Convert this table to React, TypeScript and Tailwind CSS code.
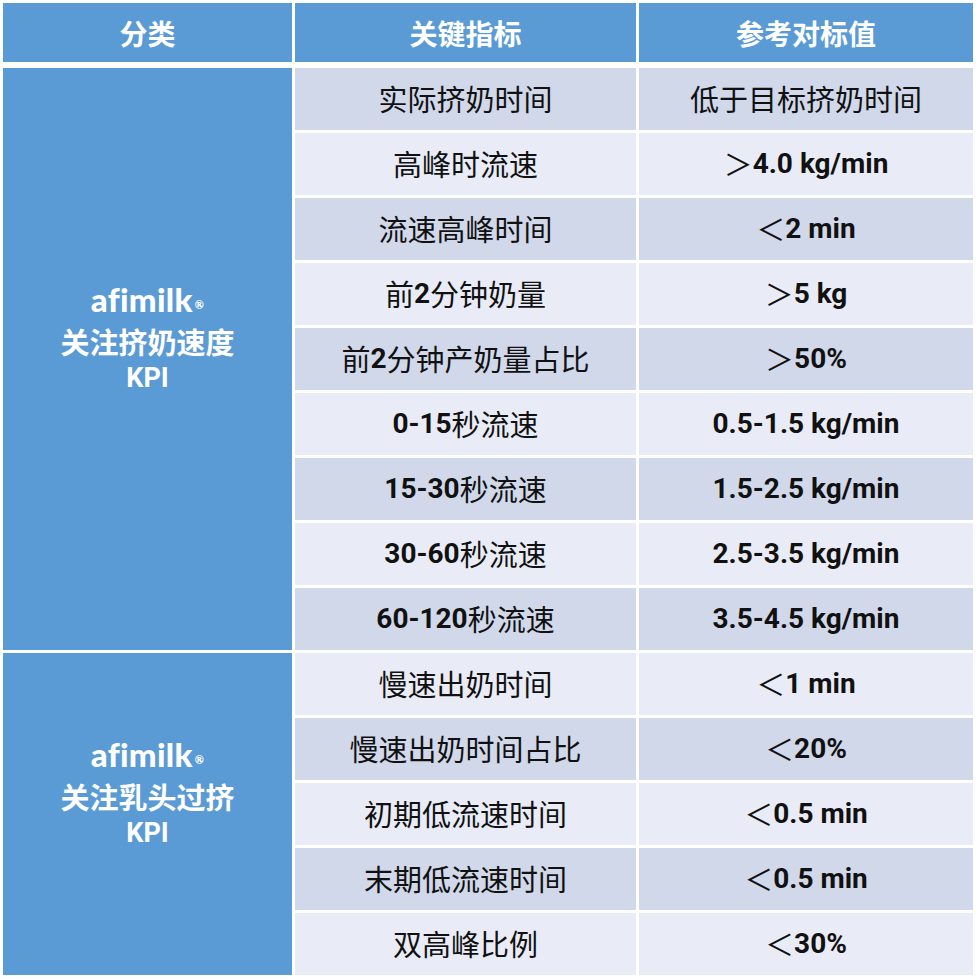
import React from "react";

type Row = { metric: string; value: string };

const rows: Row[] = [
  { metric: "实际挤奶时间", value: "低于目标挤奶时间" },
  { metric: "高峰时流速", value: "＞4.0 kg/min" },
  { metric: "流速高峰时间", value: "＜2 min" },
  { metric: "前2分钟奶量", value: "＞5 kg" },
  { metric: "前2分钟产奶量占比", value: "＞50%" },
  { metric: "0-15秒流速", value: "0.5-1.5 kg/min" },
  { metric: "15-30秒流速", value: "1.5-2.5 kg/min" },
  { metric: "30-60秒流速", value: "2.5-3.5 kg/min" },
  { metric: "60-120秒流速", value: "3.5-4.5 kg/min" },
  { metric: "慢速出奶时间", value: "＜1 min" },
  { metric: "慢速出奶时间占比", value: "＜20%" },
  { metric: "初期低流速时间", value: "＜0.5 min" },
  { metric: "末期低流速时间", value: "＜0.5 min" },
  { metric: "双高峰比例", value: "＜30%" },
];

// latin runs are bold roboto, cjk runs regular noto
const Mixed = ({ text }: { text: string }) => {
  const parts = text.match(/[\x20-\x7e]+|[^\x20-\x7e]+/g) || [];
  return (
    <>
      {parts.map((p, i) =>
        /^[\x20-\x7e]+$/.test(p) ? (
          <span key={i} className="font-['Roboto',sans-serif] font-bold text-[28px]">
            {p}
          </span>
        ) : (
          <span key={i}>{p}</span>
        )
      )}
    </>
  );
};

const Group = ({ title, span }: { title: string; span: string }) => (
  <div
    className={`${span} col-start-1 bg-[#5b9bd5] text-white flex flex-col items-center justify-center pb-[44px] font-bold`}
  >
    <div className="font-['Lato',sans-serif] font-black text-[33px] leading-[40px] tracking-[0.3px] mb-[2px]">
      afimilk<span className="text-[11px] align-top relative top-[6px] ml-[2px]">®</span>
    </div>
    <div className="text-[29px] leading-[40px]">{title}</div>
    <div className="font-['Roboto',sans-serif] text-[27px] leading-[34px]">KPI</div>
  </div>
);

export default function App() {
  return (
    <div className="w-[979px] h-[980px] bg-white pt-[3px] pl-[3px] font-['Noto_Sans_CJK_SC',sans-serif] text-[#111]">
      <div className="grid grid-cols-[289px_341px_334px] gap-x-[3px] h-[59px] mb-[6px] text-white text-[28px] font-bold">
        <div className="bg-[#5b9bd5] flex items-center justify-center">分类</div>
        <div className="bg-[#5b9bd5] flex items-center justify-center">关键指标</div>
        <div className="bg-[#5b9bd5] flex items-center justify-center">参考对标值</div>
      </div>
      <div className="grid grid-cols-[289px_341px_334px] grid-rows-[repeat(14,62px)] gap-[3px]">
        <Group title="关注挤奶速度" span="row-start-1 row-span-9" />
        <Group title="关注乳头过挤" span="row-start-10 row-span-5" />
        {rows.map((r, i) => {
          const bg = i % 2 === 0 ? "bg-[#d0d8ea]" : "bg-[#e9ecf6]";
          return (
            <React.Fragment key={i}>
              <div className={`${bg} col-start-2 flex items-center justify-center text-[29px]`}>
                <Mixed text={r.metric} />
              </div>
              <div className={`${bg} col-start-3 flex items-center justify-center text-[29px]`}>
                <Mixed text={r.value} />
              </div>
            </React.Fragment>
          );
        })}
      </div>
    </div>
  );
}
